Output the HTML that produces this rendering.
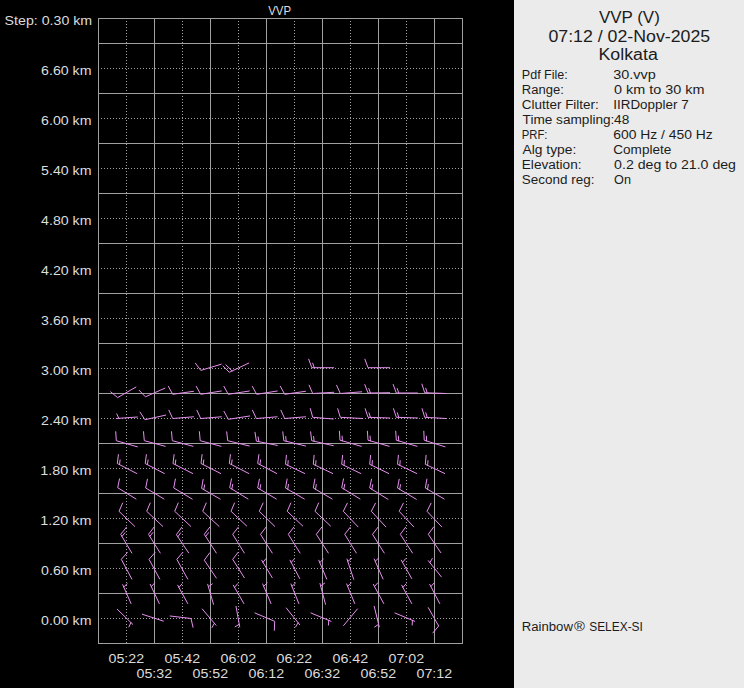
<!DOCTYPE html>
<html><head><meta charset="utf-8"><style>
html,body{margin:0;padding:0;background:#000;overflow:hidden}
svg{display:block}
text{font-family:"Liberation Sans",sans-serif}
</style></head><body>
<svg width="744" height="688" viewBox="0 0 744 688">
<rect x="0" y="0" width="744" height="688" fill="#000"/>
<rect x="514" y="0" width="230" height="688" fill="#ebebeb"/>
<g shape-rendering="crispEdges" fill="none" stroke="#a0a0a0" stroke-width="1">
<path d="M98 18.5H463"/>
<path d="M98 43.5H463"/>
<path d="M101 68.5H462" stroke-dasharray="1 2"/>
<path d="M98 93.5H463"/>
<path d="M101 118.5H462" stroke-dasharray="1 2"/>
<path d="M98 143.5H463"/>
<path d="M101 168.5H462" stroke-dasharray="1 2"/>
<path d="M98 193.5H463"/>
<path d="M101 218.5H462" stroke-dasharray="1 2"/>
<path d="M98 243.5H463"/>
<path d="M101 268.5H462" stroke-dasharray="1 2"/>
<path d="M98 293.5H463"/>
<path d="M101 318.5H462" stroke-dasharray="1 2"/>
<path d="M98 343.5H463"/>
<path d="M101 368.5H462" stroke-dasharray="1 2"/>
<path d="M98 393.5H463"/>
<path d="M101 418.5H462" stroke-dasharray="1 2"/>
<path d="M98 443.5H463"/>
<path d="M101 468.5H462" stroke-dasharray="1 2"/>
<path d="M98 493.5H463"/>
<path d="M101 518.5H462" stroke-dasharray="1 2"/>
<path d="M98 543.5H463"/>
<path d="M101 568.5H462" stroke-dasharray="1 2"/>
<path d="M98 593.5H463"/>
<path d="M101 618.5H462" stroke-dasharray="1 2"/>
<path d="M98 643.5H463"/>
<path d="M98.5 18V644"/>
<path d="M126.5 21V643" stroke-dasharray="1 2"/>
<path d="M154.5 18V644"/>
<path d="M182.5 21V643" stroke-dasharray="1 2"/>
<path d="M210.5 18V644"/>
<path d="M238.5 21V643" stroke-dasharray="1 2"/>
<path d="M266.5 18V644"/>
<path d="M294.5 21V643" stroke-dasharray="1 2"/>
<path d="M322.5 18V644"/>
<path d="M350.5 21V643" stroke-dasharray="1 2"/>
<path d="M378.5 18V644"/>
<path d="M406.5 21V643" stroke-dasharray="1 2"/>
<path d="M434.5 18V644"/>
<path d="M462.5 18V644"/>
</g>
<g fill="none" stroke="#e890f0" stroke-width="1" stroke-linecap="round" stroke-linejoin="round">
<path d="M117.3 609.3L132.7 624.3M130.9 622.6L128.9 626.9"/>
<path d="M142.4 614.3L163.4 621.1"/>
<path d="M170.2 616.0L191.0 618.5L193.0 627.3"/>
<path d="M202.3 609.0L216.0 625.2M214.4 623.3L212.0 627.5"/>
<path d="M236.0 606.3L239.7 626.8M239.3 624.3L235.1 626.8"/>
<path d="M255.0 613.0L274.7 621.3L274.3 630.3"/>
<path d="M286.3 608.0L299.7 624.7M298.1 622.8L295.6 626.9"/>
<path d="M311.0 613.0L331.0 621.3M328.7 620.3L328.5 625.1"/>
<path d="M357.4 609.0L343.6 625.5"/>
<path d="M374.2 606.3L379.2 626.8M378.6 624.4L374.6 627.0"/>
<path d="M395.0 613.0L414.7 621.3M412.4 620.3L412.2 625.1"/>
<path d="M428.3 607.7L438.7 626.0L432.9 632.9"/>
<path d="M131.0 603.5L122.7 584.7M123.7 587.0L127.2 583.7"/>
<path d="M159.3 603.5L150.2 584.3M151.3 586.6L154.6 583.1"/>
<path d="M187.7 603.5L177.7 585.2M178.9 587.4L182.1 583.8"/>
<path d="M213.5 604.3L207.7 584.3M208.4 586.7L212.3 583.9"/>
<path d="M243.8 603.5L233.3 585.2M234.5 587.4L237.6 583.7"/>
<path d="M271.0 603.5L262.7 584.0M263.7 586.3L267.2 583.0"/>
<path d="M298.8 603.5L291.0 584.0M291.9 586.3L295.5 583.1"/>
<path d="M325.5 604.3L320.0 583.5M320.6 585.9L324.6 583.2"/>
<path d="M354.7 603.5L346.7 584.0M347.6 586.3L351.2 583.1"/>
<path d="M383.7 603.5L373.3 584.3M374.5 586.5L377.7 582.9"/>
<path d="M411.7 603.5L401.7 585.2M402.9 587.4L406.1 583.8"/>
<path d="M439.7 603.5L429.7 584.3M430.9 586.5L434.1 583.0"/>
<path d="M131.8 579.0L121.3 559.3L127.3 552.6"/>
<path d="M159.7 579.0L149.0 559.3L155.0 552.6"/>
<path d="M187.7 579.0L176.8 559.3L182.7 552.5"/>
<path d="M216.3 578.0L204.3 560.2L209.6 552.9"/>
<path d="M244.3 577.7L232.7 559.3L238.2 552.2"/>
<path d="M272.2 577.7L261.7 560.2M263.0 562.3L266.0 558.6"/>
<path d="M299.7 578.5L290.0 560.2M291.2 562.4L294.4 558.8"/>
<path d="M326.7 579.0L318.8 560.2M319.8 562.5L323.3 559.2"/>
<path d="M353.7 579.3L347.0 559.0M347.8 561.4L351.6 558.4"/>
<path d="M383.0 579.0L374.2 559.0M375.2 561.3L378.7 558.0"/>
<path d="M411.7 578.5L401.3 560.2M402.5 562.4L405.6 558.7"/>
<path d="M441.3 576.8L428.3 560.7M429.9 562.6L432.3 558.5"/>
<path d="M131.8 553.0L120.7 534.3L126.4 527.3M122.0 536.4L125.0 532.7"/>
<path d="M160.2 553.0L148.5 534.3L154.0 527.2M149.8 536.4L152.8 532.6"/>
<path d="M188.6 552.8L176.4 534.7L181.7 527.4M177.8 536.8L180.6 532.9"/>
<path d="M216.3 553.0L204.3 534.3L209.8 527.1M205.7 536.4L208.6 532.6"/>
<path d="M244.3 553.0L232.7 534.3L238.3 527.2"/>
<path d="M272.2 553.0L260.5 534.3L266.0 527.2"/>
<path d="M300.0 553.0L288.3 534.3L293.8 527.2"/>
<path d="M328.3 553.0L316.3 534.3L321.8 527.1"/>
<path d="M356.3 553.0L344.7 534.3L350.3 527.2"/>
<path d="M384.2 553.0L372.5 534.3L378.0 527.2"/>
<path d="M412.5 553.0L400.3 534.3L405.7 527.1"/>
<path d="M440.8 552.7L428.3 534.3L433.6 527.0"/>
<path d="M134.7 526.3L119.0 511.3L122.6 503.1"/>
<path d="M162.7 526.3L146.7 511.3L150.2 503.0"/>
<path d="M190.7 526.3L174.7 511.3L178.2 503.0"/>
<path d="M219.0 526.3L202.7 511.3L206.2 503.0"/>
<path d="M246.7 526.0L231.0 511.3L234.5 503.0"/>
<path d="M274.7 526.3L259.3 511.3L263.0 503.1"/>
<path d="M302.7 526.0L287.2 511.3L290.8 503.0"/>
<path d="M330.5 526.0L315.0 511.3L318.6 503.0"/>
<path d="M358.0 526.8L343.3 511.3L347.3 503.2"/>
<path d="M385.8 526.8L371.3 511.3L375.4 503.3"/>
<path d="M413.7 526.8L399.2 511.3L403.3 503.3"/>
<path d="M441.7 526.8L427.0 511.3L431.0 503.2"/>
<path d="M136.0 499.0L117.7 487.7L119.5 478.9"/>
<path d="M164.0 499.0L145.7 488.0L147.4 479.2"/>
<path d="M192.2 499.1L173.7 487.9L175.4 479.1"/>
<path d="M220.2 499.1L201.6 488.4L203.1 479.5M203.8 489.6L204.6 484.9"/>
<path d="M248.0 499.0L229.7 487.7L231.5 478.9M231.8 489.0L232.8 484.3"/>
<path d="M276.3 499.0L257.7 488.0L259.4 479.2M259.9 489.3L260.7 484.6"/>
<path d="M304.3 499.0L285.5 488.0L287.1 479.1M287.7 489.3L288.5 484.5"/>
<path d="M332.2 499.0L313.3 488.0L314.9 479.1M315.5 489.3L316.3 484.5"/>
<path d="M360.0 499.0L341.7 487.7L343.5 478.9M343.8 489.0L344.8 484.3"/>
<path d="M388.0 499.3L369.7 488.0L371.5 479.2M371.8 489.3L372.8 484.6"/>
<path d="M416.3 499.3L397.5 488.0L399.2 479.2M399.6 489.3L400.6 484.6"/>
<path d="M444.2 499.0L425.3 488.0L426.9 479.1M427.5 489.3L428.3 484.5"/>
<path d="M136.8 473.5L117.3 463.5L118.4 454.6M119.5 464.6L120.1 459.9"/>
<path d="M164.3 473.5L145.2 463.5L146.4 454.6M147.4 464.7L148.1 459.9"/>
<path d="M192.7 473.5L173.0 463.5L174.1 454.6M175.2 464.6L175.8 459.9"/>
<path d="M220.7 473.5L201.0 463.5L202.1 454.6M203.2 464.6L203.8 459.9"/>
<path d="M248.8 473.5L229.3 463.5L230.4 454.6M231.5 464.6L232.1 459.9"/>
<path d="M276.7 473.5L257.7 463.5L258.9 454.6M259.9 464.7L260.6 459.9"/>
<path d="M304.7 473.5L285.5 464.3L286.4 455.3M287.8 465.4L288.2 460.6"/>
<path d="M332.7 473.5L313.3 464.3L314.1 455.3M315.6 465.4L316.0 460.6"/>
<path d="M360.8 473.5L341.7 464.3L342.6 455.3M344.0 465.4L344.4 460.6"/>
<path d="M388.7 473.5L369.7 464.3L370.6 455.3M372.0 465.4L372.4 460.6"/>
<path d="M416.7 473.5L397.5 464.3L398.4 455.3M399.8 465.4L400.2 460.6"/>
<path d="M444.7 473.5L425.3 464.3L426.1 455.3M427.6 465.4L428.0 460.6"/>
<path d="M137.3 446.8L116.3 440.7L115.7 431.7"/>
<path d="M165.2 446.3L144.3 440.7L143.5 431.7"/>
<path d="M193.0 446.3L172.3 440.7L171.5 431.7"/>
<path d="M221.0 446.3L200.2 440.7L199.4 431.7"/>
<path d="M249.3 446.0L227.7 440.7L226.7 431.8"/>
<path d="M277.3 445.4L256.4 441.2L255.0 432.3M258.9 441.7L258.1 436.9"/>
<path d="M305.5 446.0L283.8 440.7L282.8 431.8M286.2 441.3L285.7 436.5"/>
<path d="M333.3 445.7L311.7 440.7L310.6 431.8M314.1 441.3L313.6 436.5"/>
<path d="M361.3 446.3L340.0 440.2L339.4 431.2M342.4 440.9L342.1 436.1"/>
<path d="M389.2 446.3L368.0 440.2L367.4 431.2M370.4 440.9L370.1 436.1"/>
<path d="M417.0 446.3L396.3 440.2L395.7 431.2M398.7 440.9L398.4 436.1"/>
<path d="M445.0 446.8L424.2 440.2L423.8 431.2M426.6 441.0L426.4 436.2"/>
<path d="M137.4 417.0L116.3 418.5M118.8 418.3L116.8 413.9"/>
<path d="M165.8 415.1L144.9 419.7L140.1 412.1"/>
<path d="M193.5 416.8L172.7 418.5L168.9 410.3"/>
<path d="M221.3 416.8L200.7 418.5L196.9 410.3"/>
<path d="M249.7 416.0L228.3 419.3L224.0 411.4"/>
<path d="M277.2 416.8L256.3 418.5L252.5 410.3"/>
<path d="M305.5 416.8L284.7 418.5L280.9 410.3"/>
<path d="M333.3 419.0L312.7 417.3L310.3 408.6"/>
<path d="M362.5 418.5L340.3 417.3L337.7 408.7"/>
<path d="M389.7 418.0L368.0 417.3L365.2 408.7M370.5 417.4L369.0 412.8"/>
<path d="M417.5 418.0L396.3 417.3L393.5 408.7M398.8 417.4L397.3 412.8"/>
<path d="M445.8 418.5L424.7 417.3L422.1 408.7M427.2 417.4L425.8 412.8"/>
<path d="M135.9 387.1L117.6 397.6L110.7 391.8"/>
<path d="M164.9 388.2L145.4 396.8L139.2 390.3"/>
<path d="M193.5 391.3L172.7 394.3L168.4 386.4"/>
<path d="M221.3 391.0L200.7 394.3L196.3 386.4"/>
<path d="M249.3 391.0L228.3 394.3L223.9 386.4"/>
<path d="M277.2 391.0L256.7 394.3L252.3 386.4"/>
<path d="M305.5 391.3L284.7 394.3L280.4 386.4"/>
<path d="M333.8 392.3L312.7 393.5L309.1 385.2"/>
<path d="M361.7 391.8L340.3 393.5L336.6 385.3"/>
<path d="M389.7 392.7L368.0 393.0L364.8 384.6M370.5 393.0L368.8 388.5"/>
<path d="M417.5 393.0L396.3 393.0L393.2 384.5M398.8 393.0L397.2 388.5"/>
<path d="M445.8 393.5L424.7 392.7L421.9 384.1M427.2 392.8L425.7 388.2"/>
<path d="M221.2 364.2L200.8 370.4L195.4 363.2"/>
<path d="M248.7 363.1L229.3 372.3L223.0 366.1M232.1 371.0L225.9 364.8"/>
<path d="M333.5 367.7L311.8 367.7L308.7 359.2M314.3 367.7L312.7 363.2"/>
<path d="M389.7 367.7L368.0 367.7L364.9 359.2"/>
</g>
<g>
<text x="268.20" y="15" font-size="12" fill="#dddddd" textLength="22.80" lengthAdjust="spacingAndGlyphs">VVP</text>
<text x="4.60" y="25" font-size="12" fill="#dddddd" textLength="87.60" lengthAdjust="spacingAndGlyphs">Step: 0.30 km</text>
<text x="41.10" y="75.2" font-size="12" fill="#dddddd" textLength="50.40" lengthAdjust="spacingAndGlyphs">6.60 km</text>
<text x="41.10" y="125.2" font-size="12" fill="#dddddd" textLength="50.40" lengthAdjust="spacingAndGlyphs">6.00 km</text>
<text x="41.10" y="175.2" font-size="12" fill="#dddddd" textLength="50.40" lengthAdjust="spacingAndGlyphs">5.40 km</text>
<text x="41.10" y="225.2" font-size="12" fill="#dddddd" textLength="50.40" lengthAdjust="spacingAndGlyphs">4.80 km</text>
<text x="41.10" y="275.2" font-size="12" fill="#dddddd" textLength="50.40" lengthAdjust="spacingAndGlyphs">4.20 km</text>
<text x="41.10" y="325.2" font-size="12" fill="#dddddd" textLength="50.40" lengthAdjust="spacingAndGlyphs">3.60 km</text>
<text x="41.10" y="375.2" font-size="12" fill="#dddddd" textLength="50.40" lengthAdjust="spacingAndGlyphs">3.00 km</text>
<text x="41.10" y="425.2" font-size="12" fill="#dddddd" textLength="50.40" lengthAdjust="spacingAndGlyphs">2.40 km</text>
<text x="40.30" y="475.2" font-size="12" fill="#dddddd" textLength="51.20" lengthAdjust="spacingAndGlyphs">1.80 km</text>
<text x="40.30" y="525.2" font-size="12" fill="#dddddd" textLength="51.20" lengthAdjust="spacingAndGlyphs">1.20 km</text>
<text x="41.10" y="575.2" font-size="12" fill="#dddddd" textLength="50.40" lengthAdjust="spacingAndGlyphs">0.60 km</text>
<text x="41.10" y="625.2" font-size="12" fill="#dddddd" textLength="50.40" lengthAdjust="spacingAndGlyphs">0.00 km</text>
<text x="108.50" y="663" font-size="12" fill="#dddddd" textLength="35.60" lengthAdjust="spacingAndGlyphs">05:22</text>
<text x="136.50" y="678" font-size="12" fill="#dddddd" textLength="35.60" lengthAdjust="spacingAndGlyphs">05:32</text>
<text x="164.50" y="663" font-size="12" fill="#dddddd" textLength="35.60" lengthAdjust="spacingAndGlyphs">05:42</text>
<text x="192.50" y="678" font-size="12" fill="#dddddd" textLength="35.60" lengthAdjust="spacingAndGlyphs">05:52</text>
<text x="220.50" y="663" font-size="12" fill="#dddddd" textLength="35.60" lengthAdjust="spacingAndGlyphs">06:02</text>
<text x="248.50" y="678" font-size="12" fill="#dddddd" textLength="35.60" lengthAdjust="spacingAndGlyphs">06:12</text>
<text x="276.50" y="663" font-size="12" fill="#dddddd" textLength="35.60" lengthAdjust="spacingAndGlyphs">06:22</text>
<text x="304.50" y="678" font-size="12" fill="#dddddd" textLength="35.60" lengthAdjust="spacingAndGlyphs">06:32</text>
<text x="332.50" y="663" font-size="12" fill="#dddddd" textLength="35.60" lengthAdjust="spacingAndGlyphs">06:42</text>
<text x="360.50" y="678" font-size="12" fill="#dddddd" textLength="35.60" lengthAdjust="spacingAndGlyphs">06:52</text>
<text x="388.50" y="663" font-size="12" fill="#dddddd" textLength="35.60" lengthAdjust="spacingAndGlyphs">07:02</text>
<text x="416.50" y="678" font-size="12" fill="#dddddd" textLength="35.60" lengthAdjust="spacingAndGlyphs">07:12</text>
<text x="598.90" y="23" font-size="16" fill="#1c1c1c" textLength="60.90" lengthAdjust="spacingAndGlyphs">VVP (V)</text>
<text x="548.40" y="42" font-size="16" fill="#1c1c1c" textLength="161.80" lengthAdjust="spacingAndGlyphs">07:12 / 02-Nov-2025</text>
<text x="598.50" y="60.2" font-size="16" fill="#1c1c1c" textLength="59.30" lengthAdjust="spacingAndGlyphs">Kolkata</text>
<text x="521.80" y="78.5" font-size="12" fill="#1c1c1c" textLength="46.00" lengthAdjust="spacingAndGlyphs">Pdf File:</text>
<text x="613.30" y="78.5" font-size="12" fill="#1c1c1c" textLength="42.50" lengthAdjust="spacingAndGlyphs">30.vvp</text>
<text x="521.80" y="93.5" font-size="12" fill="#1c1c1c" textLength="42.00" lengthAdjust="spacingAndGlyphs">Range:</text>
<text x="614.10" y="93.5" font-size="12" fill="#1c1c1c" textLength="90.40" lengthAdjust="spacingAndGlyphs">0 km to 30 km</text>
<text x="521.80" y="108.5" font-size="12" fill="#1c1c1c" textLength="77.00" lengthAdjust="spacingAndGlyphs">Clutter Filter:</text>
<text x="613.30" y="108.5" font-size="12" fill="#1c1c1c" textLength="75.30" lengthAdjust="spacingAndGlyphs">IIRDoppler 7</text>
<text x="522.60" y="123.5" font-size="12" fill="#1c1c1c" textLength="91.80" lengthAdjust="spacingAndGlyphs">Time sampling:</text>
<text x="614.10" y="123.5" font-size="12" fill="#1c1c1c" textLength="15.20" lengthAdjust="spacingAndGlyphs">48</text>
<text x="521.80" y="138.5" font-size="12" fill="#1c1c1c" textLength="25.70" lengthAdjust="spacingAndGlyphs">PRF:</text>
<text x="613.30" y="138.5" font-size="12" fill="#1c1c1c" textLength="99.40" lengthAdjust="spacingAndGlyphs">600 Hz / 450 Hz</text>
<text x="522.60" y="153.5" font-size="12" fill="#1c1c1c" textLength="53.70" lengthAdjust="spacingAndGlyphs">Alg type:</text>
<text x="613.30" y="153.5" font-size="12" fill="#1c1c1c" textLength="58.00" lengthAdjust="spacingAndGlyphs">Complete</text>
<text x="521.80" y="168.5" font-size="12" fill="#1c1c1c" textLength="59.70" lengthAdjust="spacingAndGlyphs">Elevation:</text>
<text x="614.10" y="168.5" font-size="12" fill="#1c1c1c" textLength="121.90" lengthAdjust="spacingAndGlyphs">0.2 deg to 21.0 deg</text>
<text x="521.80" y="183.5" font-size="12" fill="#1c1c1c" textLength="72.60" lengthAdjust="spacingAndGlyphs">Second reg:</text>
<text x="614.10" y="183.5" font-size="12" fill="#1c1c1c" textLength="16.90" lengthAdjust="spacingAndGlyphs">On</text>
<text x="521.70" y="631" font-size="12" fill="#1c1c1c" textLength="51.20" lengthAdjust="spacingAndGlyphs">Rainbow</text>
<text x="573.90" y="631" font-size="12" fill="#1c1c1c" textLength="10.90" lengthAdjust="spacingAndGlyphs">®</text>
<text x="589.20" y="631" font-size="12" fill="#1c1c1c" textLength="53.70" lengthAdjust="spacingAndGlyphs">SELEX-SI</text>
</g>
</svg>
</body></html>
